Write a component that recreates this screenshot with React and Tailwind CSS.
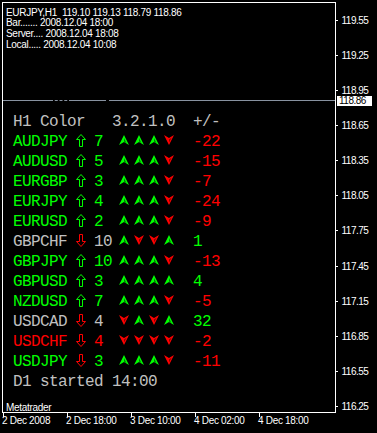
import React from 'react';

const tone = {
  g: 'text-[#00ff00]',
  s: 'text-[#c0c0c0]',
  r: 'text-[#ff0000]',
};

// пары, счётчик, четыре таймфрейма и разница
const rows = [
  { name: 'AUDJPY', c: 'g', up: true, n: '7', marks: 'uuud', diff: '-22' },
  { name: 'AUDUSD', c: 'g', up: true, n: '5', marks: 'uuud', diff: '-15' },
  { name: 'EURGBP', c: 'g', up: true, n: '3', marks: 'uuud', diff: '-7' },
  { name: 'EURJPY', c: 'g', up: true, n: '4', marks: 'uuud', diff: '-24' },
  { name: 'EURUSD', c: 'g', up: true, n: '2', marks: 'uuud', diff: '-9' },
  { name: 'GBPCHF', c: 's', up: false, n: '10', marks: 'uddu', diff: '1' },
  { name: 'GBPJPY', c: 'g', up: true, n: '10', marks: 'uuud', diff: '-13' },
  { name: 'GBPUSD', c: 'g', up: true, n: '3', marks: 'uuuu', diff: '4' },
  { name: 'NZDUSD', c: 'g', up: true, n: '7', marks: 'uuud', diff: '-5' },
  { name: 'USDCAD', c: 's', up: false, n: '4', marks: 'dudu', diff: '32' },
  { name: 'USDCHF', c: 'r', up: false, n: '4', marks: 'dddd', diff: '-2' },
  { name: 'USDJPY', c: 'g', up: false, n: '3', marks: 'uuud', diff: '-11' },
];

const prices = ['119.55', '119.25', '118.95', '118.65', '118.35', '118.05', '117.75', '117.45', '117.15', '116.85', '116.55', '116.25'];
const times = ['2 Dec 2008', '2 Dec 18:00', '3 Dec 10:00', '4 Dec 02:00', '4 Dec 18:00'];

const BigArrow = ({ up }) => (
  <svg width="10" height="13" viewBox="0 0 10 13" className="mt-[2px]">
    <path
      d={up ? 'M5 0.5L9.5 5.5H6.5V12.5H3.5V5.5H0.5Z' : 'M5 12.5L9.5 7.5H6.5V0.5H3.5V7.5H0.5Z'}
      fill="none"
      stroke={up ? '#00ff00' : '#ff0000'}
      strokeWidth="1"
    />
  </svg>
);

const Mark = ({ up }) =>
  up ? (
    <svg width="10" height="10" viewBox="0 0 10 10">
      <path d="M5 0L10 10L5 7L0 10Z" fill="#00ff00" />
      <path d="M5 3L7.5 8.2L5 6.6Z" fill="#007800" />
    </svg>
  ) : (
    <svg width="10" height="10" viewBox="0 0 10 10">
      <path d="M0 0L5 3L10 0L5 10Z" fill="#ff0000" />
      <path d="M5 4.4L7.8 2.4L5 7.6Z" fill="#880000" />
    </svg>
  );

export default function App() {
  return (
    <div className="relative w-[377px] h-[433px] bg-black pt-[2px] pl-[2px] overflow-hidden text-white font-['Liberation_Sans',Arial,sans-serif]">
      <div className="flex h-[411px]">
        {/* chart */}
        <div className="flex flex-col w-[334px] h-[411px] border border-white">
          <div className="pl-[3px] pt-[5.4px] text-[10px] leading-[9px] tracking-[-0.3px] whitespace-pre">
            <div className="h-[9.3px]">EURJPY,H1  119.10 119.13 118.79 118.86</div>
            <div className="h-[11.7px]">Bar....... 2008.12.04 18:00</div>
            <div className="h-[10.7px]">Server.... 2008.12.04 18:08</div>
            <div className="h-[9px]">Local..... 2008.12.04 10:08</div>
          </div>

          {/* bid line */}
          <div className="flex mt-[51px] h-[1px]">
            <div className="w-[47px] bg-[#8892a0]" />
            <div className="w-[22px] border-t border-dashed border-[#8892a0]" />
            <div className="w-[31px] bg-[#8892a0]" />
            <div className="w-[9px] border-t border-dashed border-[#8892a0]" />
            <div className="w-[143px] bg-[#8892a0]" />
            <div className="w-[6px] border-t border-dashed border-[#8892a0]" />
            <div className="flex-1 bg-[#8892a0]" />
          </div>

          <div className="mt-[11px] pl-[10px] font-['Liberation_Mono','Courier_New',monospace] text-[16px] leading-[20px] tracking-[-0.6px]">
            <div className="h-[20px] whitespace-pre text-[#c0c0c0]">H1 Color   3.2.1.0  +/-</div>
            {rows.map((r) => (
              <div key={r.name} className="flex h-[20px]">
                <span className={`w-[63px] ${tone[r.c]}`}>{r.name}</span>
                <span className="w-[18px]">
                  <BigArrow up={r.up} />
                </span>
                <span className={`w-[25px] ${tone[r.c]}`}>{r.n}</span>
                <span className="flex w-[74px] gap-[5px] pt-[3px]">
                  {r.marks.split('').map((m, i) => (
                    <Mark key={i} up={m === 'u'} />
                  ))}
                </span>
                <span className={r.diff.startsWith('-') ? tone.r : tone.g}>{r.diff}</span>
              </div>
            ))}
            <div className="h-[20px] whitespace-pre text-[#c0c0c0]">D1 started 14:00</div>
          </div>

          <div className="mt-auto pl-[3px] text-[10px] leading-[9px] tracking-[-0.3px]">Metatrader</div>
        </div>

        {/* price scale */}
        <div className="flex flex-col pt-[1.2px] text-[10px] leading-[11px] tracking-[-0.5px]">
          {prices.map((p) => (
            <div key={p} className="flex shrink-0 items-center h-[35.05px]">
              <div className="w-[2px] h-[1px] bg-white" />
              <span className="ml-[3.5px]">{p}</span>
            </div>
          ))}
        </div>
      </div>

      {/* time scale */}
      <div className="flex text-[10px] leading-[8px] tracking-[-0.3px] whitespace-pre">
        {times.map((t) => (
          <div key={t} className="w-[64px] flex flex-col">
            <div className="ml-[1px] w-[1px] h-[4px] bg-white" />
            <span>{t}</span>
          </div>
        ))}
      </div>

      <div className="absolute left-[337px] top-[96px] w-[35px] h-[10px] bg-white text-black text-[10px] leading-[10px] tracking-[-0.5px] pl-[2px]">
        118.86
      </div>
    </div>
  );
}
